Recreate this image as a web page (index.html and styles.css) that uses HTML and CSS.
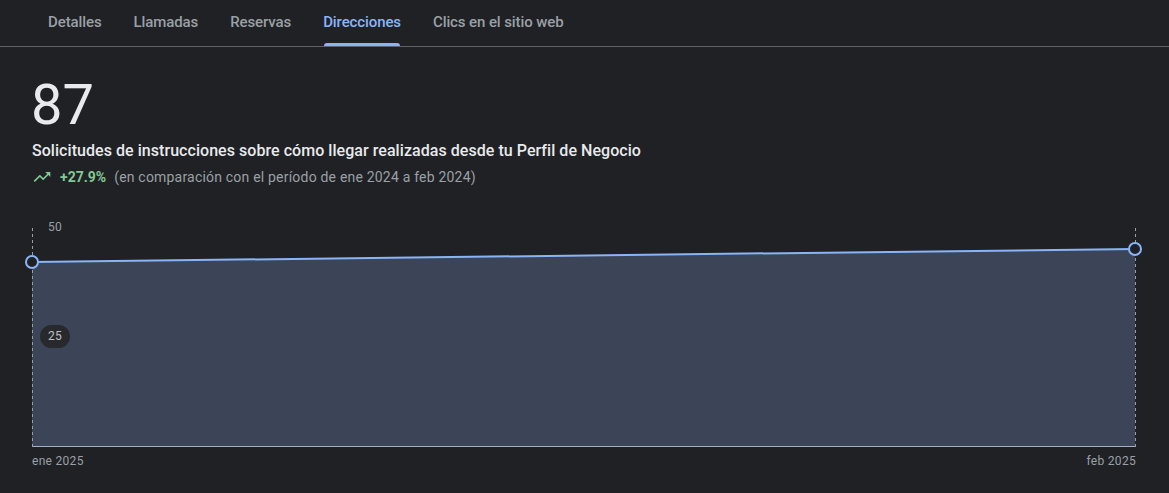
FILE: index.html
```html
<!DOCTYPE html>
<html lang="es">
<head>
<meta charset="utf-8">
<title>Direcciones</title>
<link rel="stylesheet" href="styles.css">
</head>
<body>
<nav class="tabs">
  <a class="tab"><span class="tab-label">Detalles</span></a>
  <a class="tab"><span class="tab-label">Llamadas</span></a>
  <a class="tab"><span class="tab-label">Reservas</span></a>
  <a class="tab active"><span class="tab-label">Direcciones</span></a>
  <a class="tab"><span class="tab-label">Clics en el sitio web</span></a>
</nav>
<main class="content">
  <div class="metric">87</div>
  <div class="subtitle">Solicitudes de instrucciones sobre cómo llegar realizadas desde tu Perfil de Negocio</div>
  <div class="trend">
    <svg class="trend-icon" viewBox="0 0 24 24" width="20" height="20"><path d="M16 6l2.29 2.29-4.88 4.88-4-4L2 16.59 3.41 18l6-6 4 4 6.3-6.29L22 12V6z" fill="#81c995"/></svg>
    <span class="trend-value">+27.9%</span>
    <span class="trend-note">(en comparación con el período de ene 2024 a feb 2024)</span>
  </div>
</main>
<section class="chart">
  <svg class="chart-svg" viewBox="0 0 1169 226" width="1169" height="226">
    <polygon points="32,40 1135,27 1135,224 32,224" fill="#3b4557"/>
    <line x1="32" y1="224.5" x2="1135" y2="224.5" stroke="#a3b0c6" stroke-width="1"/>
    <line x1="32.5" y1="6" x2="32.5" y2="225" stroke="#9aa0a6" stroke-width="1" stroke-dasharray="3 3"/>
    <line x1="1135.5" y1="6" x2="1135.5" y2="225" stroke="#9aa0a6" stroke-width="1" stroke-dasharray="3 3"/>
    <line x1="32" y1="40" x2="1135" y2="27" stroke="#8ab4f8" stroke-width="2"/>
    <circle cx="32" cy="40" r="6" fill="#202124" stroke="#8ab4f8" stroke-width="2"/>
    <circle cx="1135" cy="27" r="6" fill="#202124" stroke="#8ab4f8" stroke-width="2"/>
  </svg>
  <span class="y-label y50">50</span>
  <span class="y-label y25">25</span>
  <div class="x-axis">
    <span>ene 2025</span>
    <span>feb 2025</span>
  </div>
</section>
</body>
</html>
```
FILE: styles.css
```css
* { box-sizing: border-box; }
html, body {
  margin: 0;
  background: #202124;
  font-family: Roboto, "Noto Sans", Arial, sans-serif;
  color: #e8eaed;
}
.tabs {
  display: flex;
  height: 47px;
  padding-left: 32px;
  border-bottom: 1px solid #5f6368;
}
.tab {
  display: flex;
  padding: 0 16px;
  font-size: 15px;
  font-weight: 500;
  letter-spacing: -0.1px;
  color: #9aa0a6;
}
.tab-label {
  position: relative;
  padding-top: 13px;
  line-height: 18px;
}
.tab.active { color: #8ab4f8; }
.tab.active .tab-label::after {
  content: "";
  position: absolute;
  left: 1px;
  right: 1px;
  top: 43px;
  height: 3px;
  border-radius: 3px 3px 0 0;
  background: #8ab4f8;
}
.content {
  padding: 26px 32px 0;
}
.metric {
  font-size: 56px;
  line-height: 64px;
  font-weight: 400;
  color: #e8eaed;
  margin-left: -1px;
}
.subtitle {
  margin-top: 2px;
  font-size: 16px;
  font-weight: 500;
  line-height: 24px;
  letter-spacing: 0.05px;
  color: #e8eaed;
}
.trend {
  display: flex;
  align-items: center;
  margin-top: 2px;
  height: 24px;
  font-size: 14px;
}
.trend-icon { display: block; margin-right: 8px; }
.trend-value { color: #81c995; font-weight: 700; margin-right: 8px; }
.trend-note { color: #9aa0a6; letter-spacing: 0.2px; }
.chart {
  position: relative;
  margin-top: 33px;
}
.chart-svg { display: block; }
.y-label {
  position: absolute;
  font-size: 12px;
  line-height: 14px;
  color: #9aa0a6;
  letter-spacing: 0.3px;
}
.y50 { left: 48px; top: -2px; }
.y25 {
  left: 40px;
  top: 103px;
  width: 30px;
  height: 23px;
  line-height: 23px;
  text-align: center;
  border-radius: 12px;
  background: #28292c;
  color: #bdc1c6;
}
.x-axis {
  display: flex;
  justify-content: space-between;
  padding: 5px 33px 0 32px;
  font-size: 12px;
  line-height: 16px;
  letter-spacing: 0.3px;
  color: #9aa0a6;
}
```
